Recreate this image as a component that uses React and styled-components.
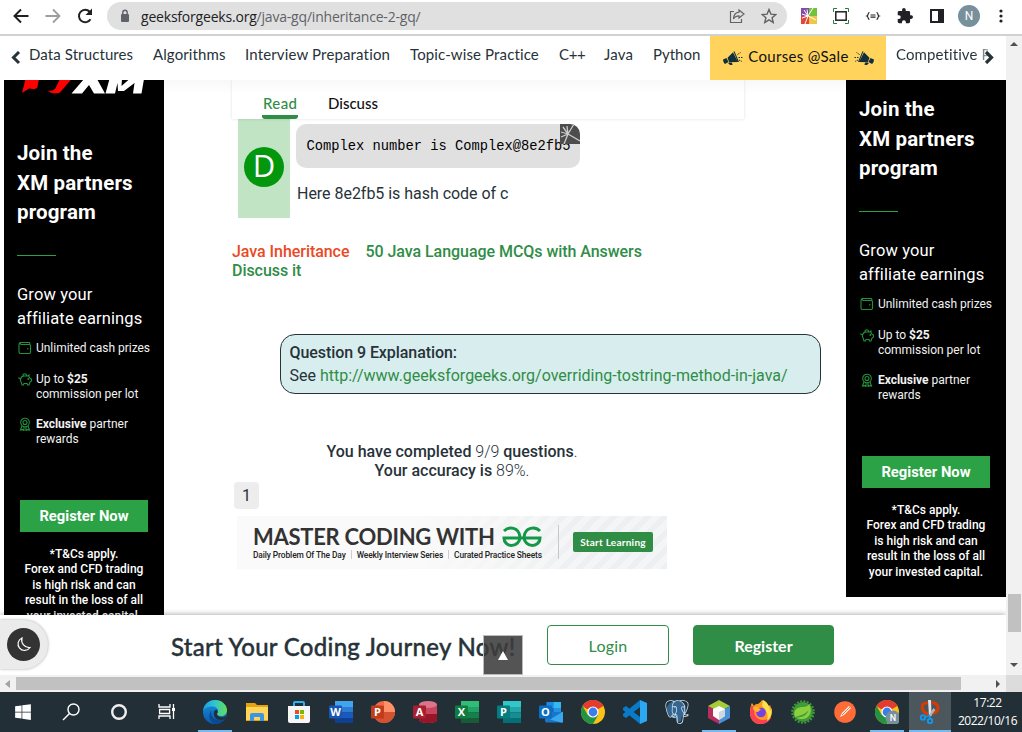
import React from "react";
import styled, { createGlobalStyle, css } from "styled-components";
import { FaWindows } from "react-icons/fa";
import { SiPostgresql } from "react-icons/si";

const GlobalStyle = createGlobalStyle`
  * { box-sizing: border-box; }
  body { margin: 0; background: #fff; overflow: hidden; }
`;
const round = `Lato, "Liberation Sans", sans-serif`;
const roboto = `Roboto, "Liberation Sans", sans-serif`;

const Screen = styled.div`
  width: 1022px; height: 732px; display: flex; flex-direction: column;
  overflow: hidden; font-family: ${roboto}; color: #273239; background: #fff;
`;
const T = styled.span`
  white-space: nowrap;
  letter-spacing: ${(p) => p.$ls || 0}px;
`;

/* ---------- browser toolbar ---------- */
const Toolbar = styled.header`
  height: 36px; flex: none; display: flex; align-items: flex-start;
  border-bottom: 2px solid #d0d2d0; padding-left: 12px;
`;
const NavButtons = styled.div`
  display: flex; gap: 14px; padding-top: 7px; width: 95px; flex: none;
  svg { width: 18px; height: 18px; display: block; }
`;
const Address = styled.div`
  width: 680px; height: 28px; margin-top: 2px; border-radius: 14px; background: #e0e0e0;
  display: flex; align-items: center; padding: 0 10px 0 13px;
  font: 14px "Open Sans", sans-serif; color: #202124;
  i { font-style: normal; color: #5f6368; }
  > span { margin-left: 11px; flex: 1; }
`;
const AddressIcons = styled.div`
  display: flex; gap: 16px;
  svg { width: 16px; height: 16px; display: block; }
`;
const Extensions = styled.div`
  display: flex; align-items: center; height: 32px; padding-left: 14px; gap: 16px;
  svg { display: block; flex: none; }
`;
const Avatar = styled.div`
  width: 22px; height: 22px; border-radius: 50%; background: #78909c; color: #fff;
  font: 12px/22px ${roboto}; text-align: center; margin: 0 -3px 0 -3px;
`;

/* ---------- page ---------- */
const Window = styled.div`height: 639px; flex: none; display: flex;`;
const Page = styled.div`width: 1006px; display: flex; flex-direction: column; position: relative;`;
const VScroll = styled.div`
  width: 16px; background: #f1f1f1; display: flex; flex-direction: column;
  align-items: center; padding: 4px 0 6px;
  svg { display: block; }
`;
const VThumb = styled.div`width: 13px; height: 38px; background: #c1c1c1; margin: 546px 0 auto 1px;`;

const Nav = styled.nav`
  height: 44px; flex: none; display: flex; align-items: center; overflow: hidden;
  font: 15px ${round}; color: #273239; padding-left: 11px;
  > svg { flex: none; }
`;
const NavItem = styled.span`
  width: ${(p) => p.$w}px; flex: none; white-space: nowrap; padding-bottom: 9px;
  letter-spacing: ${(p) => p.$ls || 0}px;
`;
const Sale = styled.div`
  width: 176px; height: 44px; background: #ffd35c; color: #111; flex: none; margin-right: 10px;
  display: flex; align-items: center; padding: 0 12px 0 13px; justify-content: space-between;
  > span { padding-bottom: 5px; }
`;
const Fade = styled.span`
  width: 92px; padding-bottom: 9px; white-space: nowrap; overflow: hidden; flex: none;
  letter-spacing: ${(p) => p.$ls || 0}px;
  background: linear-gradient(90deg, #273239 85%, #27323966 100%);
  background-clip: text; -webkit-background-clip: text; color: transparent;
`;
const NextArrow = styled.span`margin-left: -6px; margin-top: -3px; svg { display: block; }`;

const Body = styled.div`height: 535px; flex: none; display: flex; padding-left: 4px; overflow: hidden;`;

/* ---------- advertisement ---------- */
const AdFrame = styled.aside`width: 160px; height: ${(p) => p.$h}px; overflow: hidden; background: #000; flex: none;`;
const Ad = styled.div`
  height: 600px; margin-top: ${(p) => p.$shift}px; color: #fff; display: flex; flex-direction: column;
  align-items: flex-start; padding: 20px 0 0 13px;
`;
const AdLogo = styled.svg`width: 130px; height: 33px; margin-left: 3px; flex: none; display: block;`;
const AdTitle = styled.h2`margin: 45px 0 0; font: 700 20.5px/29.5px ${roboto}; letter-spacing: 0.15px; white-space: nowrap;`;
const AdRule = styled.div`width: 39px; height: 1px; background: #2ba245; margin-top: 27px; flex: none;`;
const AdLead = styled.p`margin: 27px 0 0; font: 400 16.5px/24px ${roboto}; letter-spacing: 0.13px; white-space: nowrap;`;
const AdList = styled.div`display: flex; flex-direction: column; margin-top: 10px; gap: 16px;`;
const AdRow = styled.div`
  display: flex; font: 12px/15px ${roboto}; white-space: nowrap; color: #f2f2f2; letter-spacing: -0.02px;
  svg { width: 14px; height: 14px; margin: 0 4px 0 1px; flex: none; }
  &:last-child { margin-top: -1px; }
`;
const AdButton = styled.div`
  width: 128px; height: 32px; margin: 53px 0 0 3px; background: #2ba245; flex: none;
  font: 700 14.8px/32px ${roboto}; text-align: center;
`;
const AdTerms = styled.p`
  margin: 15px 0 0 -13px; width: 160px; text-align: center; font: 500 12px/15.5px ${roboto};
`;

/* ---------- article ---------- */
const Main = styled.main`width: 682px; padding-left: 68px; flex: none; background: linear-gradient(#f8f8f8, #fff 14px);`;
const Tabs = styled.div`
  width: 512px; height: 39px; box-shadow: 0 0 3px rgba(0,0,0,.12); clip-path: inset(0 -3px -3px -3px);
  display: flex; padding-left: 30px; gap: 29px; font: 500 15px ${round}; align-items: flex-end;
`;
const Tab = styled.div`
  height: 24px; line-height: 16px; white-space: nowrap; letter-spacing: ${(p) => p.$ls || 0}px;
  padding-left: 1px; color: #111; border-radius: 0 0 3px 3px;
  ${(p) => p.$active && css`width: 36px; color: #2f8d46; border-bottom: 4px solid #2f8d46;`}
`;
const Answer = styled.div`display: flex; margin-left: 6px; height: 99px; gap: 6px;`;
const Choice = styled.div`width: 52px; background: #c0e4c4; padding: 28px 6px 0;`;
const Letter = styled.div`
  width: 40px; height: 40px; border-radius: 50%; background: #02970d; color: #fff;
  font: 31px/37px "Open Sans", sans-serif; text-align: center;
`;
const Code = styled.pre`
  position: relative; width: 284px; height: 44px; margin: 5px 0 0; padding-left: 10.5px; border-radius: 10px;
  background: #e0e0e0; color: #000; font: 13.75px/45px "Liberation Mono", monospace; overflow: hidden;
  svg { position: absolute; right: 0; top: 0; }
`;
const Note = styled.p`margin: 16px 0 0 1px; font: 16px/20px ${roboto}; letter-spacing: -0.03px;`;
const Links = styled.div`margin-top: 24px; font: 500 16px/19px ${roboto};`;
const Link = styled.span`
  color: ${(p) => p.$c || "#2f8d46"}; margin-right: 16px; white-space: nowrap; letter-spacing: -0.05px;
`;
const Explanation = styled.section`
  width: 541px; height: 60px; margin: 54px 0 0 48px; border: 1px solid #273239; border-radius: 15px;
  background: #d8eeee; padding: 6px 0 0 8.5px; font: 16px/23px ${roboto};
  b { font-weight: 500; letter-spacing: -0.07px; } em { font-style: normal; color: #2f8d46; }
`;
const Result = styled.div`
  width: 440px; margin-top: 48px; text-align: center; font: 300 16px/19px ${roboto};
  b { font-weight: 500; }
`;
const PageNumber = styled.div`
  width: 25px; height: 27px; margin: 2px 0 0 2px; border-radius: 4px; background: #ededed;
  text-align: center; font: 400 16px/27px ${roboto};
`;
const Banner = styled.div`
  width: 430px; height: 53px; margin: 7px 0 0 5px; display: flex; padding-left: 16px;
  background: linear-gradient(90deg, #fafafa 0%, #fafafa 40%, #fafafa00 80%), repeating-linear-gradient(135deg, #eeeff0 0 6px, #f4f5f6 6px 12px);
`;
const BannerText = styled.div`width: 289px; padding-top: 7px;`;
const BannerHead = styled.div`
  display: flex; justify-content: space-between; align-items: center; height: 27px; color: #333;
  font: 700 22px/29px ${round}; letter-spacing: -0.28px; white-space: nowrap;
`;
const BannerSub = styled.div`
  display: flex; justify-content: space-between; font: 500 8.4px/10px ${roboto}; white-space: nowrap; color: #222;
  letter-spacing: -0.1px; i { width: 1px; height: 9px; background: #ccc; }
`;
const BannerCta = styled.div`
  margin-left: 16px; border-left: 1px solid #c8c8c8; height: 34px; margin-top: 9px; padding: 7px 0 0 14px;
  span { display: block; width: 80px; height: 20px; background: #308d46; border-radius: 2px; color: #fff;
    font: 700 10px/20px ${round}; text-align: center; white-space: nowrap; letter-spacing: 0.25px; }
`;

/* ---------- call to action ---------- */
const Cta = styled.footer`
  height: 60px; flex: none; background: #fff; box-shadow: 0 0 6px rgba(0,0,0,.4); clip-path: inset(-8px 0 0 0);
  display: flex; align-items: flex-start; padding: 10px 0 0 171px; position: relative; font-family: ${round};
`;
const CtaTitle = styled.div`
  width: 376px; font-size: 24px; line-height: 43px; font-weight: 500; white-space: nowrap;
  letter-spacing: 0.28px; -webkit-text-stroke: 0.4px #273239;
`;
const Button = styled.div`
  width: ${(p) => p.$w}px; height: 40px; border: 1px solid #2f8d46; border-radius: 4px; margin-right: 24px;
  font: ${(p) => (p.$solid ? 700 : 400)} 16px/40px ${round}; text-align: center; letter-spacing: ${(p) => (p.$solid ? 0 : 0.2)}px;
  color: ${(p) => (p.$solid ? "#fff" : "#2f8d46")}; background: ${(p) => (p.$solid ? "#2f8d46" : "#fff")};
`;
const ThemeToggle = styled.div`
  position: absolute; left: 0; top: 584px; width: 48px; height: 49px; background: #ebebeb;
  border-radius: 0 25px 25px 0; box-shadow: 0 0 3px rgba(0,0,0,.35); padding: 8px 0 0 7px;
  div { width: 33px; height: 33px; border-radius: 50%; background: #333; padding: 8px; }
  svg { display: block; }
`;
const BackToTop = styled.div`
  position: absolute; left: 483px; top: 599px; width: 40px; height: 40px; background: rgba(60,60,60,.88);
  border: 1px solid #bbb; padding: 15px 13.5px; svg { display: block; }
`;

/* ---------- scroll bar and taskbar ---------- */
const HScroll = styled.div`height: 17px; flex: none; background: #f1f1f1; display: flex; align-items: center; padding-left: 5px;`;
const HThumb = styled.div`width: 945px; height: 13px; background: #c1c1c1; margin: 0 35px 0 6px;`;
const Corner = styled.div`width: 16px; height: 17px; background: #dcdcdc; margin-left: auto;`;
const Taskbar = styled.footer`height: 40px; flex: none; background: #232f36; display: flex;`;
const Task = styled.div`
  width: ${(p) => p.$w || 42}px; height: 40px; display: flex; align-items: center; justify-content: center; position: relative;
  margin-left: ${(p) => p.$ml || 0}px; color: #fff; background: ${(p) => (p.$on ? "#4b565d" : "none")};
  svg { width: ${(p) => p.$icon || 24}px; height: ${(p) => p.$icon || 24}px; display: block; }
  ${(p) => p.$open && css`&::after { content: ""; position: absolute; bottom: 0; height: 2px; left: ${p.$on ? 0 : 4}px; right: ${p.$on ? 0 : 4}px; background: #76b9ed; }`}
`;
const Clock = styled.div`
  flex: 1; color: #fff; font: 12px/18px "Open Sans", sans-serif; text-align: center; padding: 2px 0 0 2px; white-space: nowrap;
  letter-spacing: -0.45px;
`;

const S = ({ w = 24, h = w, box, ...p }) => <svg width={w} height={h} viewBox={box || `0 0 ${w} ${h}`} fill="none" {...p} />;

const Wallet = () => (
  <S w={14} stroke="#23913b" strokeWidth="1.1"><path d="M2.500 1.500h8.500a.8.8 0 0 1 .8.8v1.200H3a1.500 1.500 0 0 1-.5-2c-1 .2-1.500.8-1.500 1.800v7.700a1.500 1.500 0 0 0 1.500 1.500h8.500a1.500 1.500 0 0 0 1.500-1.500V4.500a1 1 0 0 0-1-1M9.800 7v1.400" /></S>
);
const Piggy = () => (
  <S w={14} stroke="#23913b" strokeWidth="1.1"><path d="M.5 5.500C1 7 2 7 2.500 7 3 5 4.500 4 6 4h3.500L11 3v2c1 1 1 2 2.500 2v2L12 10l-1 3H9.500L9 11.500H6L5.500 13H4l-.7-2.500C2.600 9.500 2.300 8.500 2.500 7M5 4a1.800 1.800 0 1 1 3.500 0" /><circle cx="10.300" cy="7" r=".4" /></S>
);
const Medal = () => (
  <S w={14} stroke="#23913b" strokeWidth="1.1"><circle cx="7" cy="5.500" r="4.300" /><circle cx="7" cy="5.500" r="2" /><path d="M4 9l-1.500 4 2-.4L6 13.500V10M10 9l1.500 4-2-.4L8 13.500V10" /></S>
);

function PartnerAd({ height, shift }) {
  return (
    <AdFrame $h={height}>
      <Ad $shift={shift}>
        <AdLogo viewBox="0 0 130 33">
          <path fill="#f00" d="m2 32 3.500-14h13.500l-1.700 8.500-2.700 1.700L9 27.500zM28 30c4 0 7-1 8-4l4-8h11.500L40 31.500c-4 1.500-9 1-12-1.500z" />
          <path fill="#fff" d="M51.500 32.500 64 18h13l8 14.500H74L69 24l-7 8.500zM85.500 32.500 89.500 18H102l-.5 7 8-7H124l-2.500 14.500H113l1.500-10.500-10.500 8h-6l-.5-8-2.500 10.500z" />
        </AdLogo>
        <AdTitle>Join the<br />XM partners<br />program</AdTitle>
        <AdRule />
        <AdLead>Grow your<br />affiliate earnings</AdLead>
        <AdList>
          <AdRow><Wallet /><span>Unlimited cash prizes</span></AdRow>
          <AdRow><Piggy /><span>Up to <b>$25</b><br />commission per lot</span></AdRow>
          <AdRow><Medal /><span><b>Exclusive</b> partner<br />rewards</span></AdRow>
        </AdList>
        <AdButton>Register Now</AdButton>
        <AdTerms>*T&amp;Cs apply.<br />Forex and CFD trading<br />is high risk and can<br />result in the loss of all<br />your invested capital.</AdTerms>
      </Ad>
    </AdFrame>
  );
}

const Flippable = styled.svg`transform: scaleX(${(p) => (p.$flip ? -1 : 1)}); flex: none;`;
const Megaphone = ({ flip }) => (
  <Flippable $flip={flip} width="20" height="14" viewBox="0 0 20 14" fill="none">
    <path fill="#12303b" d="M0 8.500 3.500 7l2 4L2 13C1 12.500 0 10 0 8.500zM4.500 6.700 10 1.200l5 9.800-8.800.2zM5 12l2-.5 2 .3.500 2.200H7zM10.500.6l1-.3 4.500 10.500-1 .2z" />
    <path stroke="#12303b" strokeDasharray="1.500 1" d="m14.500 3.500 3-2M15.500 6.500h4M16 9l3 1.500" />
  </Flippable>
);

const Office = ({ letter, dark, colors, round: isRound, book }) => (
  <S>
    {isRound ? (
      <><circle cx="13" cy="12" r="11" fill={colors[0]} /><path d="M13 1a11 11 0 0 1 11 11H13z" fill={colors[1]} /><path d="M2 12h22A11 11 0 0 1 2 12z" fill={colors[2]} /></>
    ) : book ? (
      <><path d="M6 4v16c0 4 18 4 18 0V4z" fill={colors[1]} /><path d="M6 14h18v6c0 4-18 4-18 0z" fill={colors[2]} /><ellipse cx="15" cy="4.500" rx="9" ry="3.500" fill={colors[0]} /></>
    ) : (
      <><path d="M6 1h18v6H6z" fill={colors[0]} /><path d="M6 7h18v5.500H6z" fill={colors[1]} /><path d="M6 12.500h18V18H6z" fill={colors[2]} /><path d="M6 18h18v5H6z" fill={colors[3]} /></>
    )}
    <rect x="0" y="5.500" width="13" height="13" rx="1" fill={dark} />
    <text x="6.500" y="16" textAnchor="middle" fontFamily="Open Sans, sans-serif" fontWeight="700" fontSize="11" fill="#fff">{letter}</text>
  </S>
);
const Outlook = () => (
  <S>
    <path d="M7 2h14v12H7z" fill="#1066b5" /><path d="M8 2h6.500v6H8z" fill="#1c8ae0" /><path d="M14.500 2H22v6h-7.500z" fill="#35b8f1" /><path d="M14.500 8H22v6h-7.500z" fill="#2292e2" />
    <path d="M6 21V12l18 0v9.500a1 1 0 0 1-1 1H7z" fill="#1a74c8" /><path d="m24 11.500-13 8L22 22.500h2z" fill="#38a8ee" />
    <rect x="0" y="5.500" width="13" height="13" rx="1" fill="#0a6ec5" />
    <text x="6.500" y="16" textAnchor="middle" fontFamily="Open Sans, sans-serif" fontWeight="700" fontSize="11" fill="#fff">O</text>
  </S>
);
const Chrome = ({ badge }) => (
  <S>
    <circle cx="12" cy="12" r="12" fill="#fbc116" />
    <path d="M12 12 1.600 6A12 12 0 0 1 22.400 6z" fill="#e33b2e" /><path d="M22.400 6H12l-6 3L1.600 6 12 0z" fill="#e33b2e" />
    <path d="M1.600 6A12 12 0 0 0 12 24l5.200-9L12 12 6.800 15z" fill="#229342" />
    <circle cx="12" cy="12" r="5.600" fill="#fff" /><circle cx="12" cy="12" r="4.400" fill="#3b7ded" />
    {badge && <><circle cx="18" cy="18" r="7.500" fill="#78909c" /><text x="18" y="21.200" fontSize="9" fontWeight="500" textAnchor="middle" fill="#fff" fontFamily="Roboto, sans-serif">N</text></>}
  </S>
);
const Edge = () => (
  <S>
    <defs><linearGradient id="e1" x1="0" x2="1"><stop stopColor="#1b9de2" /><stop offset=".5" stopColor="#30c6cf" /><stop offset="1" stopColor="#66e04e" /></linearGradient>
      <linearGradient id="e2" y1="0" y2="1" x2="0"><stop stopColor="#1593df" /><stop offset="1" stopColor="#0b58b0" /></linearGradient></defs>
    <circle cx="12" cy="12" r="12" fill="url(#e2)" />
    <path d="M0 11C1 4 6 0 12 0c7 0 12 5 12 10 0 4-3 6-6 6-2.500 0-4-.8-4-2 0-.8 1-1.200 1-3 0-2.500-2.500-4.500-6-4.500C5 6.500 1 8.500 0 11z" fill="url(#e1)" />
    <path d="M8.500 10C7 17 12 22 21.500 19 19 22.500 15 24 12 24 7 22 4 16 8.500 10z" fill="#0a4a93" />
    <path d="M14 14c0 2 3 3.500 5.500 3.200 1.600-.2 3-1 4-2L21.800 19C16 22 9.500 18 11 11.500c.5-1.500 2-2 3-1.800 1 1.500.8 2.800.3 3.500z" fill="#232f36" />
  </S>
);

export default function App() {
  return (
    <Screen>
      <GlobalStyle />
      <Toolbar>
        <NavButtons>
          <S w={18} stroke="#202124" strokeWidth="2"><path d="M16.500 9H3M9 2.500 2.500 9 9 15.500" /></S>
          <S w={18} stroke="#9b9da0" strokeWidth="1.800"><path d="M1.500 9H15M9 2.500 15.500 9 9 15.500" /></S>
          <S w={18} stroke="#202124" strokeWidth="2"><path d="M14.500 12.200A6.200 6.200 0 1 1 13.700 4.800l1 1" /><path d="M16 1.500V8H9.500z" fill="#202124" stroke="none" /></S>
        </NavButtons>
        <Address>
          <S w={10} h={14}><rect x="1" y="5" width="8" height="8" rx="1" fill="#5f6368" /><path d="M2.800 6V3.500a2.200 2.200 0 0 1 4.400 0V6" stroke="#5f6368" strokeWidth="1.400" /></S>
          <T $ls={-0.2}>geeksforgeeks.org<i>/java-gq/inheritance-2-gq/</i></T>
          <AddressIcons>
            <S w={16} stroke="#5f6368" strokeWidth="1.200"><path d="M5 3.500H1.500v11h11V11M10 2l5 4-5 4V7.800C7 7.800 5.500 9 4.500 11 4.700 7.500 6.500 4.500 10 4.200z" /></S>
            <S w={16} stroke="#5f6368" strokeWidth="1.400"><path d="m8 1.500 1.900 4.600 4.900.4-3.700 3.200 1.100 4.800L8 11.900l-4.200 2.600 1.100-4.800-3.700-3.200 4.900-.4z" /></S>
          </AddressIcons>
        </Address>
        <Extensions>
          <S w={16}><path fill="#8649a8" d="M0 0h8v8H0z" /><path fill="#71c33b" d="M8 0h8v8H8z" /><path fill="#e6453c" d="M0 8h8v8H0z" /><path fill="#edc747" d="M8 8h8v8H8z" /><path stroke="#fff" d="m4 16 3-8 5-8M7 8 1 6M7 8 3 2M7 8 6 1.500M7 8l8 4M7 8 1 10" /></S>
          <S w={16} stroke="#2c7a37"><path d="M.5 4V.5H4M12 .5h3.500V4M15.500 12v3.500H12M4 15.500H.5V12" /><rect x="2.800" y="3.800" width="10.400" height="8.400" stroke="#222" strokeWidth="1.500" /></S>
          <S w={16} stroke="#222" strokeWidth="1.200"><path d="M4.500 4.500c-2 0-1 3-2.500 3.500 1.500.5.500 3.500 2.500 3.500M11.500 4.500c2 0 1 3 2.500 3.500-1.500.5-.5 3.500-2.500 3.500M5.500 7h5M5.500 9.200h5" /></S>
          <S w={16} box="1 1 22 22"><path fill="#202124" d="M20.500 11H19V7a2 2 0 0 0-2-2h-4V3.500a2.500 2.500 0 0 0-5 0V5H4a2 2 0 0 0-2 2v3.800h1.500a2.700 2.700 0 0 1 0 5.400H2V20a2 2 0 0 0 2 2h3.800v-1.500a2.700 2.700 0 0 1 5.400 0V22H17a2 2 0 0 0 2-2v-4h1.500a2.500 2.500 0 0 0 0-5z" /></S>
          <S w={16}><path fill="#202124" d="M1 1h14v14H1zM3 3v10h6V3z" fillRule="evenodd" /></S>
          <Avatar>N</Avatar>
          <S w={16} fill="#202124"><circle cx="8" cy="3" r="1.600" /><circle cx="8" cy="8" r="1.600" /><circle cx="8" cy="13" r="1.600" /></S>
        </Extensions>
      </Toolbar>

      <Window>
        <Page>
          <Nav>
            <S w={18} h={14} stroke="#273239" strokeWidth="3"><path d="M8 1 2.500 6.500 8 12" /></S>
            <NavItem $w={124} $ls={0.1}>Data Structures</NavItem>
            <NavItem $w={92} $ls={0.1}>Algorithms</NavItem>
            <NavItem $w={165} $ls={0.15}>Interview Preparation</NavItem>
            <NavItem $w={149} $ls={0.12}>Topic-wise Practice</NavItem>
            <NavItem $w={45} $ls={-0.3}>C++</NavItem>
            <NavItem $w={49} $ls={0.2}>Java</NavItem>
            <NavItem $w={57}>Python</NavItem>
            <Sale><Megaphone /><T $ls={0.3}>Courses @Sale</T><Megaphone flip /></Sale>
            <Fade $ls={0.1}>Competitive P</Fade>
            <NextArrow><S w={14} h={14} stroke="#273239" strokeWidth="3.200"><path d="m4 2 5.500 5.500-5.500 5.500" /></S></NextArrow>
          </Nav>
          <Body>
            <PartnerAd height={535} shift={-39} />
            <Main>
              <Tabs><Tab $active $ls={0.4}>Read</Tab><Tab>Discuss</Tab></Tabs>
              <Answer>
                <Choice><Letter>D</Letter></Choice>
                <div>
                  <Code>Complex number is Complex@8e2fb5
                    <S w={20}><path fill="#4d4d4d" d="M0 0h20v20H0z" /><path stroke="#ccc" strokeWidth="1.300" d="M4 20 8 10l6-10M8 10 1 8M8 10 3 3M8 10 7 2M8 10l12 7M1 13l7-3" /></S>
                  </Code>
                  <Note>Here 8e2fb5 is hash code of c</Note>
                </div>
              </Answer>
              <Links>
                <Link $c="#eb4924">Java Inheritance</Link><Link>50 Java Language MCQs with Answers</Link><br />
                <Link>Discuss it</Link>
              </Links>
              <Explanation><b>Question 9 Explanation:</b><br />See <em>http://www.geeksforgeeks.org/overriding-tostring-method-in-java/</em></Explanation>
              <Result><b>You have completed</b> 9/9 <b>questions</b>.<br /><b>Your accuracy is</b> 89%.</Result>
              <PageNumber>1</PageNumber>
              <Banner>
                <BannerText>
                  <BannerHead>MASTER CODING WITH
                    <S w={40} h={22} stroke="#149847" strokeWidth="3"><path d="M2 5C7 0 17 1 18 11c0 5-4 8.500-8.500 8.500-4 0-7.500-3-7.500-7.500h36c0 4.500-3.500 7.500-7.500 7.500C26 19.500 22 16 22 11 23 1 33 0 38 5" /></S>
                  </BannerHead>
                  <BannerSub><span>Daily Problem Of The Day</span><i /><span>Weekly Interview Series</span><i /><span>Curated Practice Sheets</span></BannerSub>
                </BannerText>
                <BannerCta><span>Start Learning</span></BannerCta>
              </Banner>
            </Main>
            <PartnerAd height={517} shift={-83} />
          </Body>
          <Cta>
            <CtaTitle>Start Your Coding Journey Now!</CtaTitle>
            <Button $w={122}>Login</Button>
            <Button $w={141} $solid>Register</Button>
          </Cta>
          <ThemeToggle><div><S w={17} stroke="#fff" strokeWidth="1.200"><path d="M7 2a6.500 6.500 0 1 0 8 9.500A7.500 7.500 0 0 1 7 2z" /></S></div></ThemeToggle>
          <BackToTop><S w={10} h={9}><path d="M5 0 10 9H0z" fill="#fff" /></S></BackToTop>
        </Page>
        <VScroll>
          <S w={8} h={8}><path d="M0 6 4 2l4 4z" fill="#505050" /></S>
          <VThumb />
          <S w={8} h={8}><path d="M0 2h8L4 6z" fill="#505050" /></S>
        </VScroll>
      </Window>

      <HScroll>
        <S w={5} h={8}><path d="M5 0v8L0 4z" fill="#a3a3a3" /></S>
        <HThumb />
        <S w={5} h={8}><path d="M0 0v8l4-4z" fill="#505050" /></S>
        <Corner />
      </HScroll>

      <Taskbar>
        <Task $w={46} $icon={18}><FaWindows /></Task>
        <Task $w={48} $ml={1}><S stroke="#fff" strokeWidth="1.400"><circle cx="14.500" cy="9.500" r="5.500" /><path d="M10.500 13.500 4 20" /></S></Task>
        <Task $w={48}><S stroke="#eee" strokeWidth="2.400"><circle cx="12" cy="12" r="6.800" /></S></Task>
        <Task $w={48}><S stroke="#fff" strokeWidth="1.300"><path d="M4 4v3h11V4M4 19v-3h11v3M4.600 9.500h10v4h-10zM18.500 4v15" /><path fill="#fff" stroke="none" d="M17 8h3v3h-3z" /></S></Task>
        <Task $open $ml={3}><Edge /></Task>
        <Task><S><path d="M1 3h9l2 2h11v16H1z" fill="#e5a30c" /><path d="M1 7h22v13H1z" fill="#ffd45c" /><path d="M5 21v-6a2 2 0 0 1 2-2h10a2 2 0 0 1 2 2v6h-4v-4H9v4z" fill="#3b96df" /></S></Task>
        <Task><S><path d="M7 7V3a1 1 0 0 1 1-1h8a1 1 0 0 1 1 1v4" stroke="#29b4ef" strokeWidth="2" /><path d="M1 6h22v15a2 2 0 0 1-2 2H3a2 2 0 0 1-2-2z" fill="#f6f6f6" /><path d="M8 10h4v4H8z" fill="#e9501f" /><path d="M13 10h4v4h-4z" fill="#7db700" /><path d="M8 15h4v4H8z" fill="#0aa0e6" /><path d="M13 15h4v4h-4z" fill="#fbb300" /></S></Task>
        <Task><Office letter="W" dark="#1854b4" colors={["#41a5ee", "#2b7cd3", "#185abd", "#103f91"]} /></Task>
        <Task><Office letter="P" dark="#c13c1b" round colors={["#ed6c47", "#ff9068", "#d35230"]} /></Task>
        <Task><Office letter="A" dark="#a81f30" book colors={["#dd7589", "#c6445c", "#971527"]} /></Task>
        <Task><Office letter="X" dark="#107c41" colors={["#30bd76", "#21a366", "#16804a", "#185c37"]} /></Task>
        <Task><Office letter="P" dark="#077c80" colors={["#31c6c9", "#24a6a8", "#138f93", "#056f73"]} /></Task>
        <Task><Outlook /></Task>
        <Task><Chrome /></Task>
        <Task><S><path d="m17 0 7 3v18l-7 3z" fill="#2ba8f1" /><path d="M17 0v7L3 18l-3-2V14zM0 8l3-2 14 11v7L0 10z" fill="#087bc9" /></S></Task>
        <Task><S><ellipse cx="11.500" cy="9.500" rx="10" ry="9" fill="#336791" /><path d="M9 10h9l-2 11-4 2z" fill="#336791" /><SiPostgresql width="24" height="24" color="#d9e6ef" /></S></Task>
        <Task $open><S><path d="m12 0 11 6-11 6L1 6z" fill="#a5cd39" /><path d="M1 6l11 6v12L1 18z" fill="#b72e5c" /><path d="m23 6-11 6v12l11-6z" fill="#4a90d9" /><path d="m12 6 6 3v7l-6 4-6-4V9z" fill="#fff" /><path d="m12 12 6-3v7l-6 4z" fill="#cfd8df" /></S></Task>
        <Task><S>
          <path d="M2 6c0-2 1-3 1-3l2 3c1-2 3-2 4-2 1-1 3-2 4-4 4 2 6 5 6 7l2-2c2 4 2 8 1 11-2 5-6 8-11 8C5 24 1 19 1 13c0-3 0-5 1-7z" fill="#ff9a1f" />
          <path d="M1 12c0 7 4 12 11 12 5 0 9-3 10.500-7.500C17 22 8 21 5.500 14 5 12 6 9 9 9 6 6 3 6 2 6z" fill="#ff3f54" /><path d="M14 0c4 2 7 6 7 11l1.500-3c1 6-1 11-4.500 13 2-6-1-12-5-15z" fill="#ffe14b" /><circle cx="12" cy="12.500" r="4.800" fill="#7542e5" /><path d="M4 7c4-1 6 1 8 3-2 0-2 2-4 2-3 0-4-3-4-5z" fill="#ffb42e" />
        </S></Task>
        <Task><S><circle cx="12" cy="12" r="10" fill="#3f9a3a" /><circle cx="12" cy="12" r="10.800" stroke="#3f9a3a" strokeWidth="2" strokeDasharray="2 1.400" /><path d="M4 17C1 9 8 7 12 7c3 0 5-1 6.500-3 3 7 1 15-8 15-2 0-4-.5-5-1.500 6 0 10-2 12-7-4 4-8 5-13.500 6.500z" fill="#8bd03c" /></S></Task>
        <Task><S><circle cx="12" cy="12" r="10.800" fill="#ff6c37" /><path d="M7 17l2-4 7-7 2 2-7 7z" fill="#fff" /><path d="m9 15 8-8" stroke="#ff6c37" /></S></Task>
        <Task $open><Chrome badge /></Task>
        <Task $open $on $ml={1}><S>
          <path d="M10 3C5 2.500 3.500 5 4.500 9c1 3 3.500 4.500 6 5M14 2.500c4 .5 6 3 6 6 0 2.500-2 4-5 5" stroke="#d83b01" strokeWidth="3" />
          <path d="M10 0h3l.5 16H11z" fill="#dfe3e6" /><path d="m15.500 8 2 2-5.500 7-2-1z" fill="#aeb4b8" />
          <circle cx="5" cy="17.500" r="2.200" stroke="#1595e7" strokeWidth="2" /><circle cx="12" cy="21" r="2.200" stroke="#1595e7" strokeWidth="2" /><path d="m7 17 5-1.500M12 19v-3" stroke="#1595e7" strokeWidth="1.800" />
        </S></Task>
        <Clock>17:22<br />2022/10/16</Clock>
      </Taskbar>
    </Screen>
  );
}
